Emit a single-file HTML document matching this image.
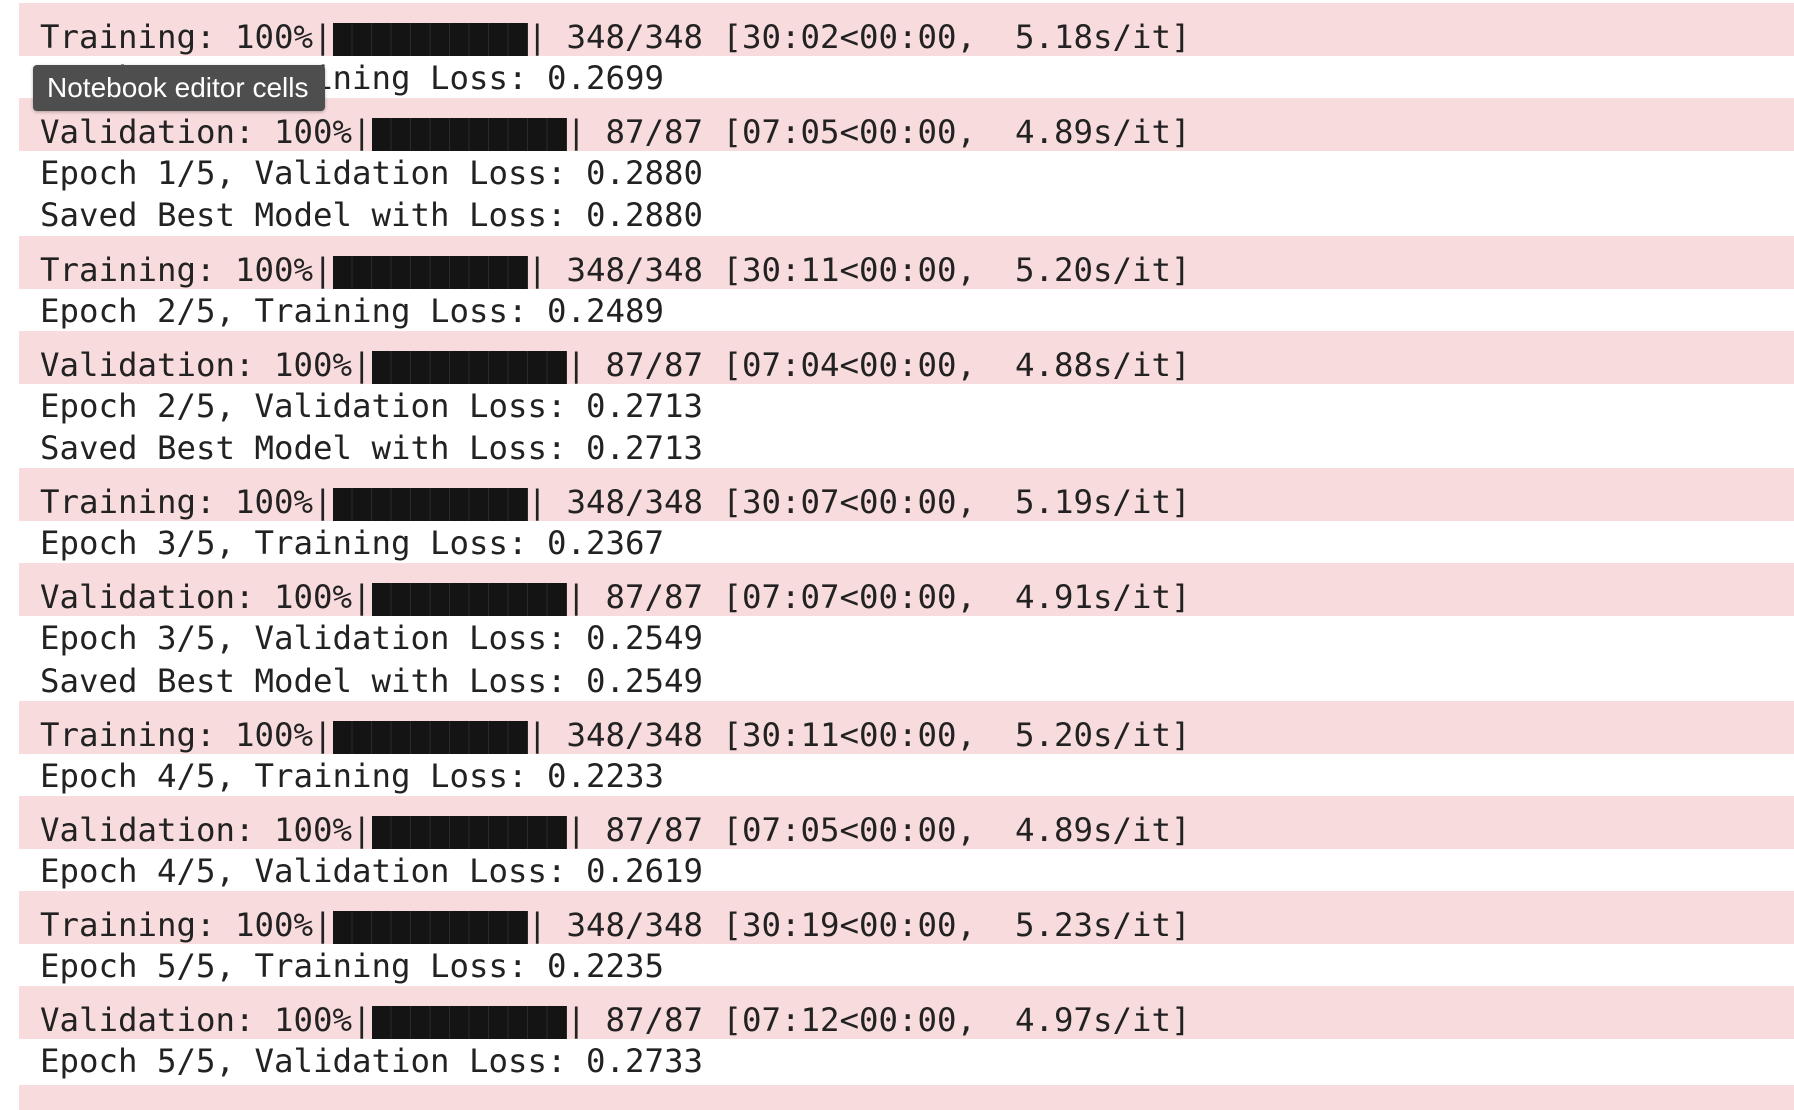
<!DOCTYPE html>
<html><head><meta charset="utf-8"><style>
html,body{margin:0;padding:0;background:#fff;width:1794px;height:1110px;overflow:hidden;}
body{font-family:"DejaVu Sans Mono","Liberation Mono",monospace;font-size:32.4px;color:#222;position:relative;}
.l{height:42.2px;line-height:44px;white-space:pre;margin-left:19px;padding-left:21px;}
.p{background:#f8dbdc;padding-top:11px;height:42px;line-height:46px;}
.bar{display:inline-block;width:10ch;height:33px;vertical-align:-8px;background:#141414;background-image:repeating-linear-gradient(90deg,#141414 0,#141414 calc(1ch - 1px),#2a2a2a calc(1ch - 1px),#2a2a2a 1ch);}
.tip{position:absolute;left:33px;top:65px;width:292px;height:46px;background:#4e4e4e;border-radius:4px;color:#fff;font-family:"Liberation Sans",sans-serif;font-size:28px;line-height:46px;padding-left:14px;box-sizing:border-box;box-shadow:0 1px 3px rgba(0,0,0,.3);white-space:nowrap;overflow:hidden;}
.end{position:absolute;left:19px;right:0;top:1085px;bottom:0;background:#f8dbdc;}
</style></head><body>
<div style="height:3px"></div>
<div class="l p">Training: 100%|<span class="bar"></span>| 348/348 [30:02&lt;00:00,  5.18s/it]</div>
<div class="l">Epoch 1/5, Training Loss: 0.2699</div>
<div class="l p">Validation: 100%|<span class="bar"></span>| 87/87 [07:05&lt;00:00,  4.89s/it]</div>
<div class="l">Epoch 1/5, Validation Loss: 0.2880</div>
<div class="l">Saved Best Model with Loss: 0.2880</div>
<div class="l p">Training: 100%|<span class="bar"></span>| 348/348 [30:11&lt;00:00,  5.20s/it]</div>
<div class="l">Epoch 2/5, Training Loss: 0.2489</div>
<div class="l p">Validation: 100%|<span class="bar"></span>| 87/87 [07:04&lt;00:00,  4.88s/it]</div>
<div class="l">Epoch 2/5, Validation Loss: 0.2713</div>
<div class="l">Saved Best Model with Loss: 0.2713</div>
<div class="l p">Training: 100%|<span class="bar"></span>| 348/348 [30:07&lt;00:00,  5.19s/it]</div>
<div class="l">Epoch 3/5, Training Loss: 0.2367</div>
<div class="l p">Validation: 100%|<span class="bar"></span>| 87/87 [07:07&lt;00:00,  4.91s/it]</div>
<div class="l">Epoch 3/5, Validation Loss: 0.2549</div>
<div class="l">Saved Best Model with Loss: 0.2549</div>
<div class="l p">Training: 100%|<span class="bar"></span>| 348/348 [30:11&lt;00:00,  5.20s/it]</div>
<div class="l">Epoch 4/5, Training Loss: 0.2233</div>
<div class="l p">Validation: 100%|<span class="bar"></span>| 87/87 [07:05&lt;00:00,  4.89s/it]</div>
<div class="l">Epoch 4/5, Validation Loss: 0.2619</div>
<div class="l p">Training: 100%|<span class="bar"></span>| 348/348 [30:19&lt;00:00,  5.23s/it]</div>
<div class="l">Epoch 5/5, Training Loss: 0.2235</div>
<div class="l p">Validation: 100%|<span class="bar"></span>| 87/87 [07:12&lt;00:00,  4.97s/it]</div>
<div class="l">Epoch 5/5, Validation Loss: 0.2733</div>
<div class="end"></div>
<div class="tip">Notebook editor cells</div>
</body></html>
